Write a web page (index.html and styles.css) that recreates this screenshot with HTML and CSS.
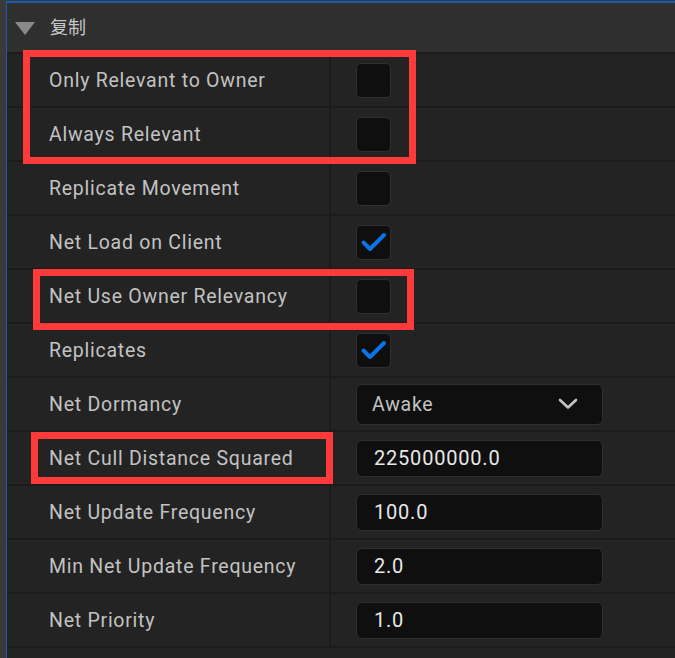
FILE: index.html
```html
<!DOCTYPE html>
<html>
<head>
<meta charset="utf-8">
<link rel="stylesheet" href="styles.css">
</head>
<body>
<div class="panel">
  <div class="header">
    <span class="tri"></span>
    <span class="title">复制</span>
  </div>
  <div class="row"><div class="label">Only Relevant to Owner</div><div class="value"><span class="cb"></span></div></div>
  <div class="row"><div class="label">Always Relevant</div><div class="value"><span class="cb"></span></div></div>
  <div class="row"><div class="label">Replicate Movement</div><div class="value"><span class="cb"></span></div></div>
  <div class="row"><div class="label">Net Load on Client</div><div class="value"><span class="cb"><svg viewBox="0 0 35 35" width="35" height="35"><path d="M7.5 18.5 L14 25 L28 11" fill="none" stroke="#0a74e6" stroke-width="4" stroke-linecap="round" stroke-linejoin="round"/></svg></span></div></div>
  <div class="row"><div class="label">Net Use Owner Relevancy</div><div class="value"><span class="cb"></span></div></div>
  <div class="row"><div class="label">Replicates</div><div class="value"><span class="cb"><svg viewBox="0 0 35 35" width="35" height="35"><path d="M7.5 18.5 L14 25 L28 11" fill="none" stroke="#0a74e6" stroke-width="4" stroke-linecap="round" stroke-linejoin="round"/></svg></span></div></div>
  <div class="row"><div class="label">Net Dormancy</div><div class="value"><div class="dropdown"><span>Awake</span><svg class="chev" viewBox="0 0 20 12" width="20" height="12"><path d="M2 2 L10 9.5 L18 2" fill="none" stroke="#c4c4c4" stroke-width="2.6" stroke-linecap="round" stroke-linejoin="round"/></svg></div></div></div>
  <div class="row"><div class="label">Net Cull Distance Squared</div><div class="value"><div class="input">225000000.0</div></div></div>
  <div class="row"><div class="label">Net Update Frequency</div><div class="value"><div class="input">100.0</div></div></div>
  <div class="row"><div class="label">Min Net Update Frequency</div><div class="value"><div class="input">2.0</div></div></div>
  <div class="row"><div class="label">Net Priority</div><div class="value"><div class="input">1.0</div></div></div>
  <div class="rest"></div>
</div>
<div class="mark mark1"></div>
<div class="mark mark2"></div>
<div class="mark mark3"></div>
</body>
</html>
```

FILE: styles.css
```css
html, body {
  margin: 0;
  padding: 0;
  background: #3a3a3a;
  overflow: hidden;
}
body {
  width: 675px;
  height: 658px;
  position: relative;
  font-family: Roboto, "Noto Sans CJK SC", sans-serif;
}
.panel {
  margin-top: 1px;
  margin-left: 6px;
  border-top: 2px solid #1a5cb2;
  border-left: 1px solid #1a5cb2;
  background: #232323;
  height: 655px;
}
.header {
  height: 49px;
  background: #2f2f2f;
  border-bottom: 2px solid #1b1b1b;
  display: flex;
  align-items: center;
}
.tri {
  width: 0;
  height: 0;
  margin-left: 8px;
  margin-top: 2px;
  border-left: 10px solid transparent;
  border-right: 10px solid transparent;
  border-top: 13px solid #8a8a8a;
}
.title {
  margin-left: 15px;
  margin-top: -3px;
  color: #c8c8c8;
  font-size: 18px;
  font-family: "Noto Sans CJK SC", sans-serif;
}
.row {
  height: 52px;
  border-bottom: 2px solid #1b1b1b;
  display: grid;
  grid-template-columns: 324px 1fr;
}
.label {
  display: flex;
  align-items: center;
  padding-left: 42px;
  color: #c2c2c2;
  font-size: 19.5px;
  letter-spacing: 0.75px;
  border-right: 2px solid #1b1b1b;
}
.value {
  display: flex;
  align-items: center;
  padding-left: 25px;
}
.cb {
  box-sizing: border-box;
  width: 35px;
  height: 35px;
  background: #0f0f0f;
  border: 1.5px solid #303030;
  border-radius: 5px;
  display: block;
  position: relative;
}
.cb svg {
  position: absolute;
  left: -1.5px;
  top: -1.5px;
}
.dropdown {
  box-sizing: border-box;
  width: 247px;
  height: 41px;
  background: #0f0f0f;
  border: 1.5px solid #2e2e2e;
  border-radius: 6px;
  display: flex;
  align-items: center;
  justify-content: space-between;
  padding: 0 24px 0 15px;
  color: #c2c2c2;
  font-size: 19.5px;
  letter-spacing: 0.75px;
}
.input {
  box-sizing: border-box;
  width: 247px;
  height: 37px;
  background: #0f0f0f;
  border: 1.5px solid #2e2e2e;
  border-radius: 6px;
  display: flex;
  align-items: center;
  padding-left: 17px;
  color: #e8e8e8;
  font-size: 20px;
  letter-spacing: 0.8px;
}
.mark {
  position: absolute;
  box-sizing: border-box;
  border: 7px solid #fe3a3a;
}
.mark1 { left: 23px; top: 50px; width: 393px; height: 114px; }
.mark2 { left: 33px; top: 269px; width: 381px; height: 61px; }
.mark3 { left: 31px; top: 432px; width: 302px; height: 52px; }
```
